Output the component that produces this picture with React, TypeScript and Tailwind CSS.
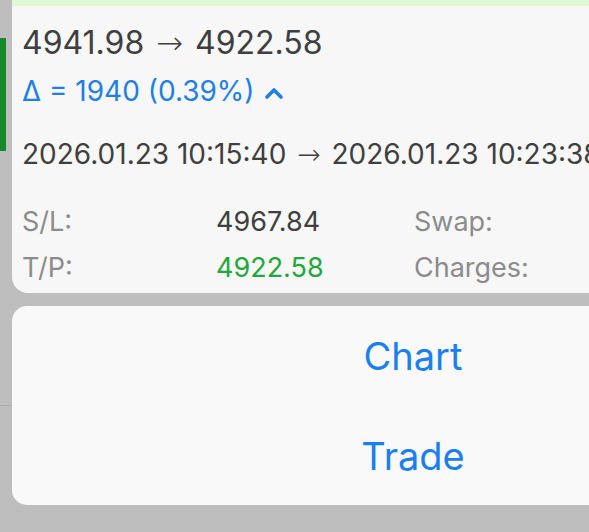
const font = { fontFamily: 'Inter, "Liberation Sans", sans-serif' };

const Arrow = () => (
  <span className="font-extralight mx-[3px]" style={{ fontFamily: '"DejaVu Sans", sans-serif' }}>
    →
  </span>
);

const DetailRow = ({ label, value, valueClass, label2 }: { label: string; value: string; valueClass: string; label2: string }) => (
  <div className="grid grid-cols-[194px_198px_1fr] text-[27px] leading-none">
    <span className="text-[#8c8c8c]">{label}</span>
    <span className={valueClass}>{value}</span>
    <span className="text-[#8c8c8c]">{label2}</span>
  </div>
);

export default function App() {
  return (
    <div className="w-[589px] h-[532px] bg-[#bebebe] overflow-hidden flex" style={font}>
      {/* what shows through the dim overlay on the left */}
      <div className="w-[12px] shrink-0 flex flex-col">
        <div className="mt-[38px] h-[113px] w-[6px] bg-[#17892a]" />
        <div className="mt-[254px] h-[1px] w-full bg-[#aaaaaa]" />
      </div>

      <div className="flex flex-col shrink-0 w-[802px]">
        {/* position details card */}
        <div className="h-[293px] bg-[#f7f7f7] rounded-bl-[16px] flex flex-col">
          <div className="h-[6px] bg-[#e0f8d6]" />
          <div className="pl-[10px] flex flex-col">
            <div className="mt-[21px] text-[32px] leading-none text-[#3f3f3f] whitespace-nowrap">
              4941.98 <Arrow /> 4922.58
            </div>
            <div className="mt-[18px] flex items-center gap-[9px] text-[28px] leading-none text-[#1e7fe6] whitespace-nowrap">
              <span>Δ = 1940 (0.39%)</span>
              <svg width="20" height="14" viewBox="0 0 20 14" className="mt-[4px]">
                <path d="M3 11 L10 4 L17 11" fill="none" stroke="#1e7fe6" strokeWidth="3.6" strokeLinecap="round" strokeLinejoin="round" />
              </svg>
            </div>
            <div className="mt-[35px] text-[28px] leading-none text-[#3f3f3f] whitespace-nowrap">
              2026.01.23 10:15:40 <Arrow /> 2026.01.23 10:23:38
            </div>
            <div className="mt-[39px] flex flex-col gap-[19px]">
              <DetailRow label="S/L:" value="4967.84" valueClass="text-[#3f3f3f]" label2="Swap:" />
              <DetailRow label="T/P:" value="4922.58" valueClass="text-[#21a83a]" label2="Charges:" />
            </div>
          </div>
        </div>

        {/* action sheet */}
        <div className="mt-[13px] h-[199px] bg-[#f9f9f9] rounded-l-[15px] flex flex-col text-[38px] text-[#1a7ff0]">
          <button className="h-[100px] flex items-center justify-center leading-none">Chart</button>
          <button className="h-[99px] flex items-center justify-center leading-none">Trade</button>
        </div>
      </div>
    </div>
  );
}
